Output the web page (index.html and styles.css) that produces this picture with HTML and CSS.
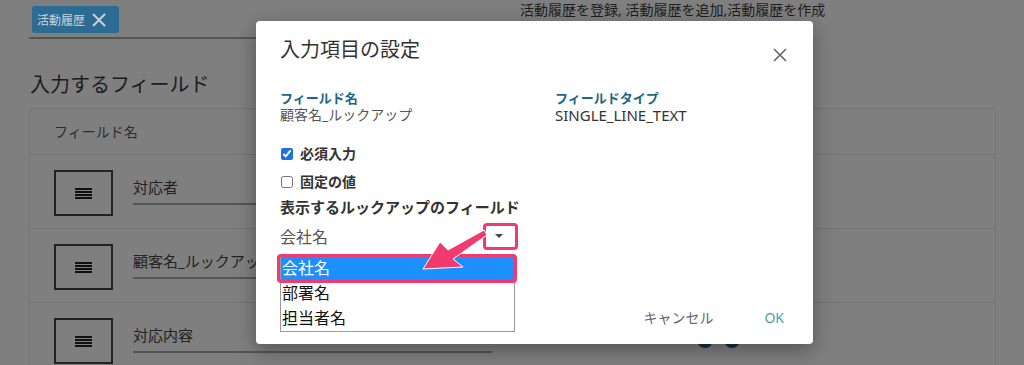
FILE: index.html
```html
<!DOCTYPE html>
<html lang="ja">
<head>
  <meta charset="UTF-8">
  <meta name="viewport" content="width=device-width, initial-scale=1.0">
  <title>入力項目の設定</title>
  <link rel="stylesheet" href="styles.css">
</head>
<body>
  <div class="page">
    <div class="topbar">
      <div class="chips">
        <span class="tag">活動履歴
          <svg class="tag-x" viewBox="0 0 16 16" width="16" height="16"><path d="M2 2 L14 14 M14 2 L2 14" /></svg>
        </span>
      </div>
      <div class="events">活動履歴を登録, 活動履歴を追加,活動履歴を作成</div>
    </div>

    <h2>入力するフィールド</h2>

    <div class="card">
      <div class="card-head">フィールド名</div>
      <div class="row">
        <div class="handle"><span class="bars"></span></div>
        <div class="field">対応者</div>
        <div class="actions"><span class="dot"></span><span class="dot"></span></div>
      </div>
      <div class="row">
        <div class="handle"><span class="bars"></span></div>
        <div class="field">顧客名_ルックアップ</div>
        <div class="actions"><span class="dot"></span><span class="dot"></span></div>
      </div>
      <div class="row">
        <div class="handle"><span class="bars"></span></div>
        <div class="field">対応内容</div>
        <div class="actions"><span class="dot"></span><span class="dot"></span></div>
      </div>
    </div>
  </div>

  <div class="modal">
    <div class="modal-head">
      <h3>入力項目の設定</h3>
      <svg class="close" viewBox="0 0 14 14" width="14" height="14"><path d="M1 1 L13 13 M13 1 L1 13" /></svg>
    </div>

    <div class="info">
      <div class="info-col">
        <div class="label">フィールド名</div>
        <div class="value">顧客名_ルックアップ</div>
      </div>
      <div class="info-col">
        <div class="label">フィールドタイプ</div>
        <div class="value latin">SINGLE_LINE_TEXT</div>
      </div>
    </div>

    <label class="check first"><input type="checkbox" checked> 必須入力</label>
    <label class="check"><input type="checkbox"> 固定の値</label>

    <div class="lookup-label">表示するルックアップのフィールド</div>
    <div class="select">
      <span>会社名</span>
      <span class="caret"></span>
    </div>

    <ul class="options">
      <li class="selected">会社名</li>
      <li>部署名</li>
      <li>担当者名</li>
    </ul>

    <div class="footer">
      <button class="btn cancel">キャンセル</button>
      <button class="btn ok">OK</button>
    </div>

    <!-- annotation -->
    <div class="mark mark-caret"></div>
    <div class="mark mark-item"></div>
    <svg class="pointer" viewBox="0 0 557 323" width="557" height="323">
      <polygon points="167,248 184,221 192,229 228,209 231,214 197,238 207,246" />
    </svg>
  </div>
</body>
</html>
```

FILE: styles.css
```css
body {
  margin: 0;
  height: 365px;
  overflow: hidden;
  background: #7f7f7f;
  font-family: "Noto Sans", "Noto Sans CJK JP", sans-serif;
  color: #222;
  position: relative;
}
.page {
  padding-left: 29px;
}
.topbar {
  display: flex;
}
.chips {
  width: 463px;
  height: 39px;
  border-bottom: 2px solid #555;
  padding: 6px 0 0 3px;
  box-sizing: border-box;
}
.tag {
  display: inline-flex;
  align-items: center;
  height: 27px;
  padding: 0 12px 0 5px;
  background: #2c6b93;
  border-radius: 3px;
  color: #c9d4db;
  font-size: 12px;
  box-sizing: border-box;
}
.tag-x {
  margin-left: 6px;
  stroke: #c9d4db;
  stroke-width: 2;
}
.events {
  margin-left: 28px;
  font-size: 14px;
  line-height: 16px;
  padding-top: 2px;
  color: #1e1e1e;
}
h2 {
  margin: 32px 0 9px 1px;
  font-size: 20px;
  line-height: 28px;
  font-weight: normal;
  color: #1c1c1c;
}
.card {
  width: 967px;
  border: 1px solid #747474;
  border-radius: 4px;
  box-sizing: border-box;
}
.card-head {
  height: 45px;
  padding-left: 24px;
  font-size: 14px;
  line-height: 45px;
  color: #2e2e2e;
}
.row {
  display: flex;
  align-items: flex-start;
  height: 74px;
  padding: 15px 0 0 24px;
  border-top: 1px solid #737373;
  box-sizing: border-box;
}
.handle {
  width: 59px;
  height: 46px;
  border: 2px solid #222;
  box-sizing: border-box;
  display: flex;
  align-items: center;
  justify-content: center;
}
.bars {
  width: 17px;
  height: 11px;
  background: repeating-linear-gradient(#111 0 2px, transparent 2px 3px);
}
.field {
  width: 359px;
  height: 35px;
  margin-left: 20px;
  border-bottom: 2px solid #555;
  box-sizing: border-box;
  font-size: 15px;
  line-height: 35px;
  color: #222;
}
.actions {
  display: flex;
  gap: 11px;
  margin: 14px 0 0 205px;
}
.dot {
  width: 16px;
  height: 16px;
  border-radius: 50%;
  background: #0c3546;
}

/* dialog */
.modal {
  position: absolute;
  left: 256px;
  top: 21px;
  width: 557px;
  height: 323px;
  background: #fff;
  border-radius: 4px;
  box-shadow: 0 6px 20px rgba(0,0,0,0.35);
  padding: 15px 0 0 24px;
  box-sizing: border-box;
  display: flex;
  flex-direction: column;
}
.modal-head {
  display: flex;
  justify-content: space-between;
  align-items: flex-start;
}
h3 {
  margin: 0;
  font-size: 20px;
  line-height: 28px;
  font-weight: normal;
  color: #333;
}
.close {
  margin: 12px 26px 0 0;
  stroke: #666;
  stroke-width: 1.6;
}
.info {
  display: flex;
  margin-top: 26px;
}
.info-col {
  width: 275px;
  flex-shrink: 0;
}
.label {
  font-size: 13px;
  line-height: 17px;
  font-weight: bold;
  color: #1c6686;
}
.value {
  font-size: 14px;
  line-height: 16px;
  color: #555;
}
.value.latin {
  font-size: 15px;
  color: #333;
}
.check {
  display: flex;
  align-items: center;
  font-size: 14px;
  line-height: 20px;
  font-weight: bold;
  color: #333;
  margin-top: 8px;
}
.check.first {
  margin-top: 21px;
}
.check input {
  width: 12px;
  height: 12px;
  margin: 0 7px 0 1px;
  accent-color: #1f6fe5;
}
.lookup-label {
  margin-top: 5px;
  font-size: 15px;
  line-height: 20px;
  font-weight: bold;
  color: #333;
}
.select {
  display: flex;
  align-items: center;
  justify-content: space-between;
  width: 223px;
  height: 22px;
  margin-top: 8px;
  font-size: 16px;
  color: #555;
}
.caret {
  width: 0;
  height: 0;
  border-left: 4px solid transparent;
  border-right: 4px solid transparent;
  border-top: 4px solid #444;
}
.options {
  position: absolute;
  left: 24px;
  top: 234px;
  width: 235px;
  margin: 0;
  padding: 0;
  list-style: none;
  background: #fff;
  border: 1px solid #9a9a9a;
  box-sizing: border-box;
}
.options li {
  height: 25px;
  line-height: 25px;
  padding-left: 1px;
  font-size: 16px;
  color: #111;
}
.options li.selected {
  background: #1e8fff;
  color: #fff;
}
.footer {
  display: flex;
  justify-content: flex-end;
  gap: 19px;
  margin-top: auto;
  padding: 0 13px 9px 0;
}
.btn {
  background: none;
  border: none;
  padding: 0 16px;
  height: 36px;
  font-family: inherit;
  font-size: 14px;
  cursor: pointer;
}
.cancel {
  color: #666;
}
.ok {
  color: #4a9fa6;
}
.mark {
  position: absolute;
  border: 3px solid #f23a70;
  border-radius: 4px;
  box-sizing: border-box;
}
.mark-caret {
  left: 227px;
  top: 202px;
  width: 35px;
  height: 27px;
}
.mark-item {
  left: 21px;
  top: 233px;
  width: 240px;
  height: 29px;
}
.pointer {
  position: absolute;
  left: 0;
  top: 0;
  fill: #f23a70;
  stroke: #fff;
  stroke-width: 1;
}
```
